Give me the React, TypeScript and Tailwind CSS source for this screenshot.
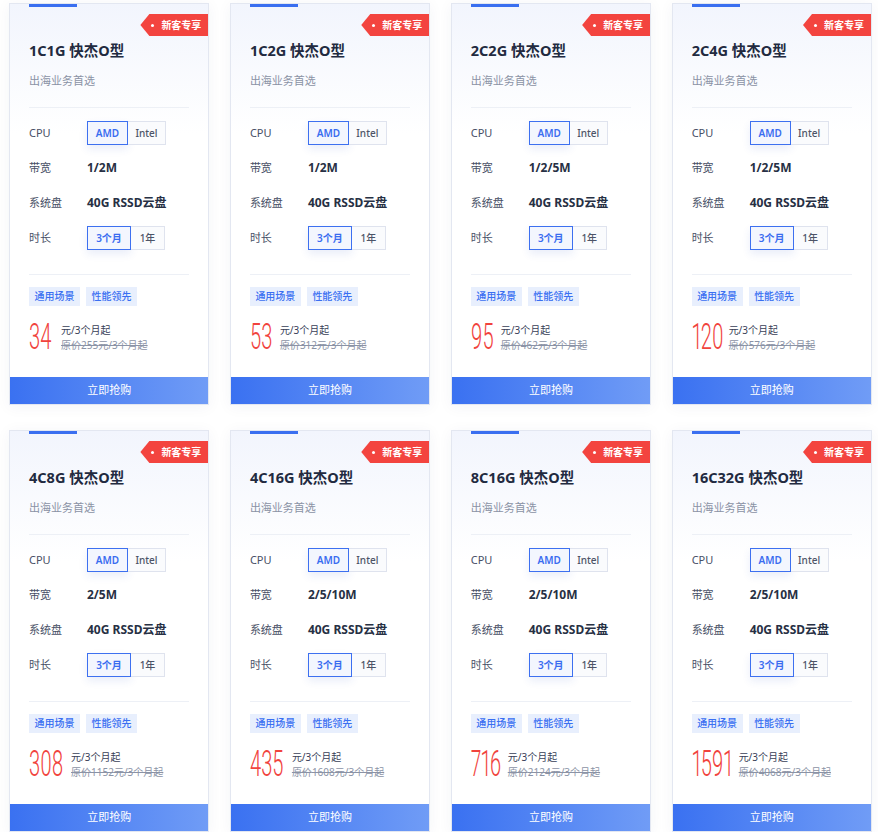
import React from "react";

type CardData = {
  name: string;
  bw: string;
  price: string;
  orig: string;
  w: string;
};

const cards: CardData[] = [
  { name: "1C1G", bw: "1/2M", price: "34", orig: "255", w: "w-[26px]" },
  { name: "1C2G", bw: "1/2M", price: "53", orig: "312", w: "w-[24px]" },
  { name: "2C2G", bw: "1/2/5M", price: "95", orig: "462", w: "w-[24px]" },
  { name: "2C4G", bw: "1/2/5M", price: "120", orig: "576", w: "w-[31px]" },
  { name: "4C8G", bw: "2/5M", price: "308", orig: "1152", w: "w-[36px]" },
  { name: "4C16G", bw: "2/5/10M", price: "435", orig: "1608", w: "w-[36px]" },
  { name: "8C16G", bw: "2/5/10M", price: "716", orig: "2124", w: "w-[31px]" },
  { name: "16C32G", bw: "2/5/10M", price: "1591", orig: "4068", w: "w-[41px]" },
];

function Toggle({ a, b, wa, wb }: { a: string; b: string; wa: string; wb: string }) {
  return (
    <div className="flex h-6">
      <div
        className={`${wa} flex items-center justify-center border border-[#3d70f0] bg-[#f3f6fe] text-[10px] font-semibold text-[#3a6cf0] shadow-[0_4px_8px_rgba(40,80,200,0.10)]`}
      >
        {a}
      </div>
      <div
        className={`${wb} flex items-center justify-center border border-l-0 border-[#dfe3ee] bg-[#fafbfd] text-[10px] font-medium text-[#4d5467]`}
      >
        {b}
      </div>
    </div>
  );
}

function Row({ label, children }: { label: string; children: React.ReactNode }) {
  return (
    <div className="flex h-6 items-center">
      <div className="w-[58px] text-[11px] text-[#485066]">{label}</div>
      {children}
    </div>
  );
}

function Card({ c }: { c: CardData }) {
  return (
    <div className="relative flex h-[402px] flex-col border border-[#e3e7f1] bg-[linear-gradient(180deg,#f2f5fd_0px,#ffffff_130px)] shadow-[0_2px_14px_rgba(30,50,100,0.05)]">
      <div className="absolute left-[19px] top-0 h-[3px] w-12 bg-[#3a6ff0]" />
      <div className="absolute right-0 top-[10px] flex h-[22px] w-[68px] items-center bg-[#f3443f] [clip-path:polygon(9px_0,100%_0,100%_100%,9px_100%,0_50%)]">
        <span className="ml-[11px] h-[3px] w-[3px] rounded-full bg-white" />
        <span className="ml-[7px] text-[10px] font-bold leading-none text-white">新客专享</span>
      </div>
      <div className="flex flex-col px-[19px] pt-[36px]">
        <div className="h-5 text-[14.5px] font-bold leading-5 text-[#222a40]">{c.name} 快杰O型</div>
        <div className="mt-[13px] text-[11px] leading-4 text-[#8a92a5]">出海业务首选</div>
        <div className="mt-[18px] h-px bg-[#edf0f6]" />
        <div className="mt-[13px] flex flex-col gap-[11px]">
          <Row label="CPU">
            <Toggle a="AMD" b="Intel" wa="w-[41px]" wb="w-[38px]" />
          </Row>
          <Row label="带宽">
            <span className="text-[12px] font-bold text-[#273044]">{c.bw}</span>
          </Row>
          <Row label="系统盘">
            <span className="text-[12px] font-bold text-[#273044]">40G RSSD云盘</span>
          </Row>
          <Row label="时长">
            <Toggle a="3个月" b="1年" wa="w-[44px]" wb="w-[34px]" />
          </Row>
        </div>
        <div className="mt-[24px] h-px bg-[#edf0f6]" />
        <div className="mt-[12px] flex gap-[6px]">
          <span className="flex h-[19px] w-[51px] items-center justify-center bg-[#e8effd] text-[10px] font-medium text-[#3a6ff2]">通用场景</span>
          <span className="flex h-[19px] w-[51px] items-center justify-center bg-[#e8effd] text-[10px] font-medium text-[#3a6ff2]">性能领先</span>
        </div>
        <div className="mt-[14px] flex items-center">
          <div className={`${c.w} h-[35px] overflow-visible`}>
            <span className="inline-block origin-left scale-x-[0.56] font-['Roboto',sans-serif] text-[36px] font-light leading-[35px] text-[#f1433d] proportional-nums">
              {c.price}
            </span>
          </div>
          <div className="ml-[6px] flex flex-col text-[10px] leading-[15px]">
            <span className="text-[#384057]">元/3个月起</span>
            <span className="text-[#8b93a6] line-through">原价{c.orig}元/3个月起</span>
          </div>
        </div>
      </div>
      <div className="mt-auto flex h-[27px] items-center justify-center bg-[linear-gradient(90deg,#3a71f1,#709cf6)] text-[11px] text-white">
        立即抢购
      </div>
    </div>
  );
}

export default function App() {
  return (
    <div className="min-h-[832px] w-[878px] bg-white font-['Noto_Sans','Noto_Sans_CJK_SC',sans-serif]">
      <div className="grid grid-cols-4 gap-x-[20.5px] gap-y-[25px] pl-[9px] pr-[6px] pt-[3px]">
        {cards.map((c) => (
          <Card key={c.name} c={c} />
        ))}
      </div>
    </div>
  );
}
